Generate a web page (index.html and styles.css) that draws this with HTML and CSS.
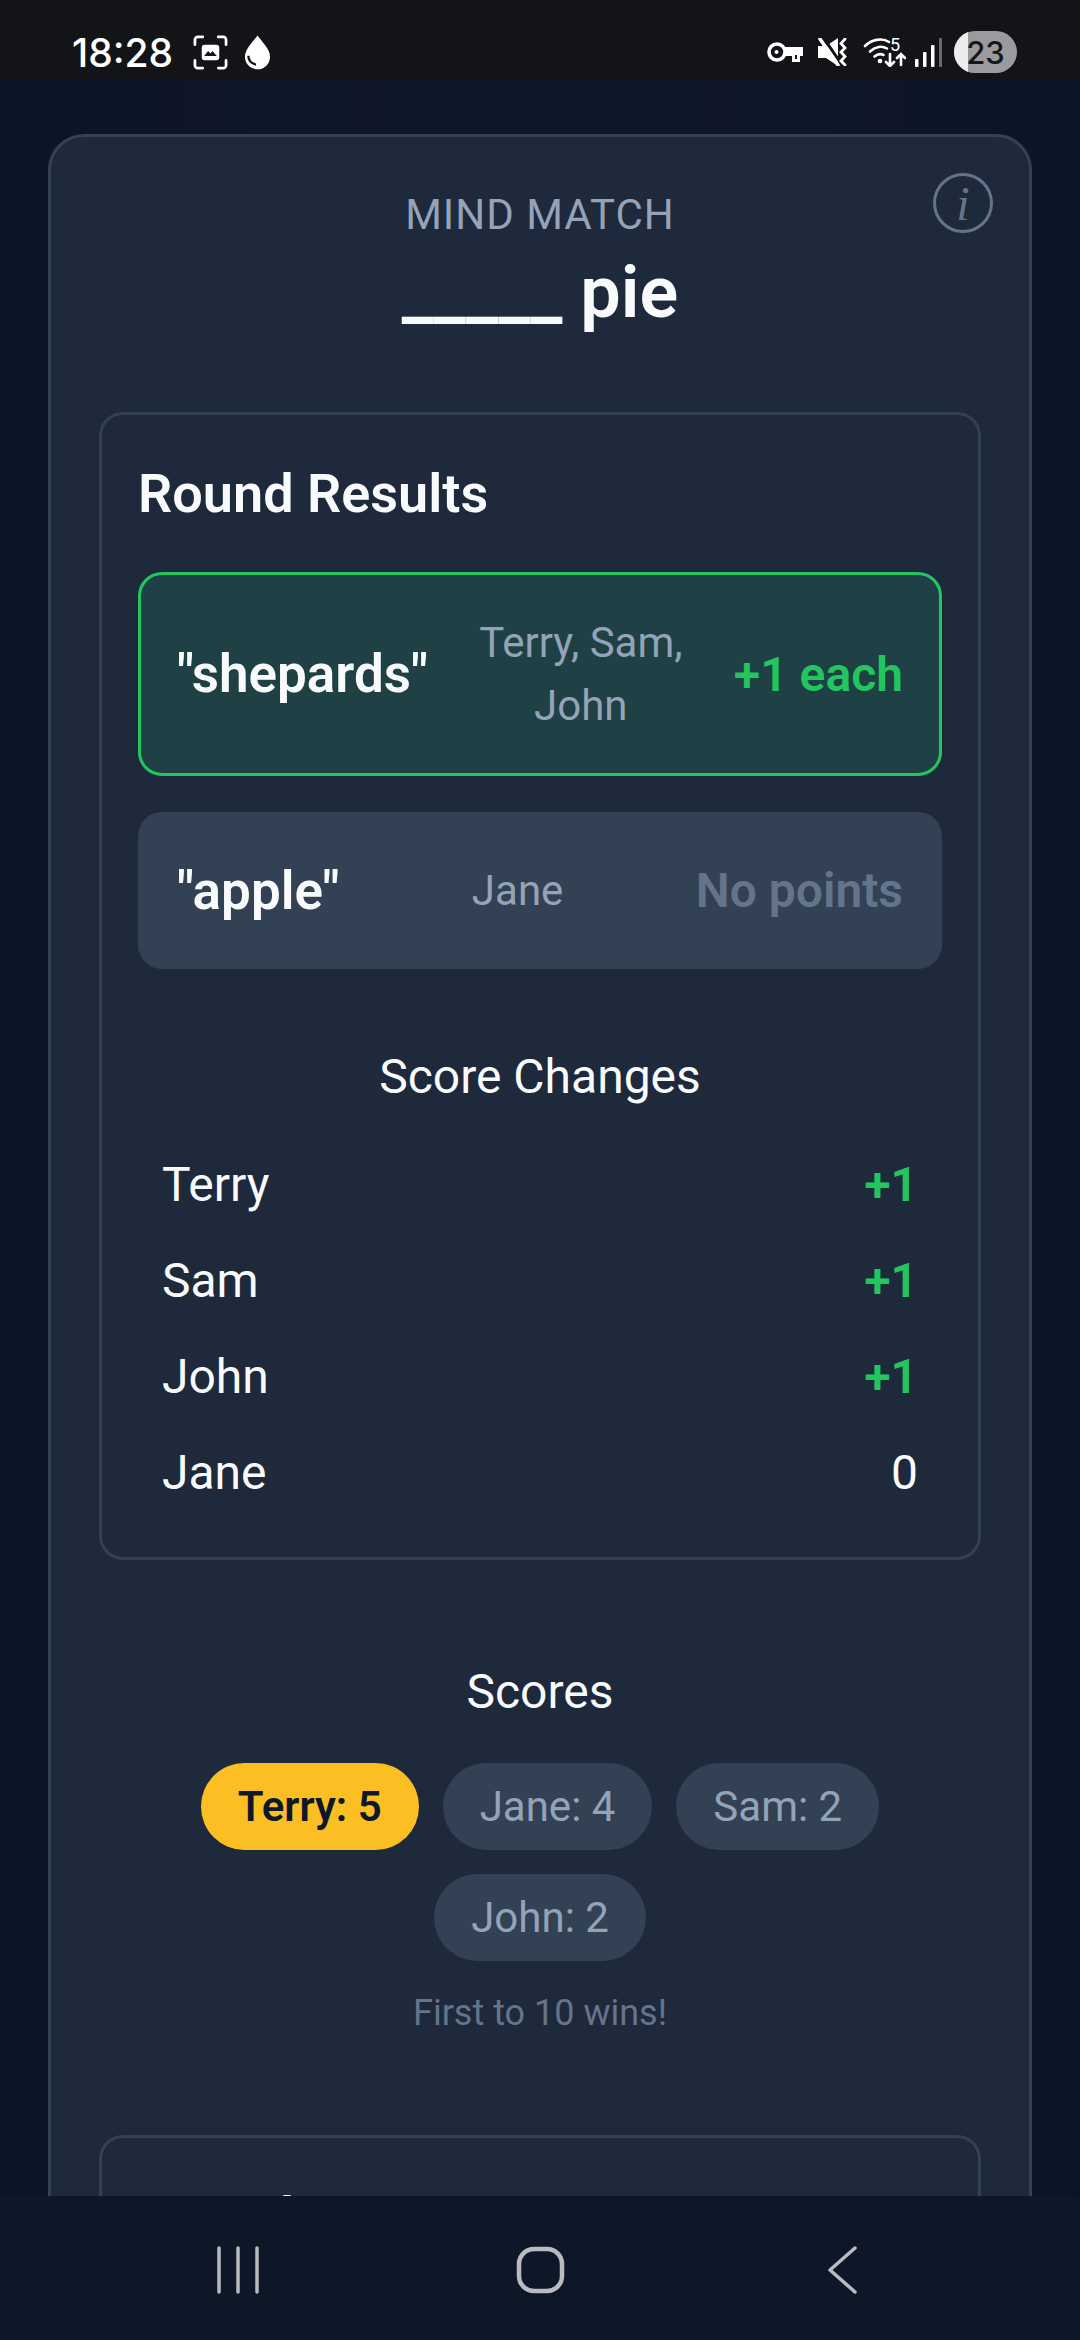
FILE: index.html
```html
<!DOCTYPE html>
<html lang="en">
<head>
    <meta charset="UTF-8">
    <meta name="viewport" content="width=device-width, initial-scale=1.0">
    <title>Mind Match</title>
    <link rel="stylesheet" href="styles.css">
</head>
<body>
    <div class="status-bar">
        <span class="clock">18:28</span>
        <svg class="ic-capture" viewBox="0 0 36 36" fill="none" stroke="#fff" stroke-width="2.800" stroke-linecap="round">
            <path d="M2 10V5a3 3 0 0 1 3-3h5M26 2h5a3 3 0 0 1 3 3v5M34 26v5a3 3 0 0 1-3 3h-5M10 34H5a3 3 0 0 1-3-3v-5"/>
            <rect x="9" y="10" width="18" height="16" rx="3" fill="#fff" stroke="none"/>
            <path d="M11.500 21.500l4-5 2.500 2.500 2-2.500 4.500 5z" fill="#131418" stroke="none"/>
        </svg>
        <svg class="ic-drop" viewBox="0 0 28 36">
            <path d="M14 1C9 8 1 15 1 23a13 13 0 0 0 26 0C27 15 19 8 14 1z" fill="#fff"/>
            <path d="M4.500 22c0 5 3 8 8 9" fill="none" stroke="#131418" stroke-width="2.400"/>
        </svg>
        <div class="status-right">
            <svg class="ic-key" viewBox="0 0 36 20">
                <circle cx="10" cy="10" r="8" fill="none" stroke="#fff" stroke-width="3.600"/>
                <circle cx="9.500" cy="10" r="2" fill="#fff"/>
                <path d="M18 5h18v9h-3v6h-8v-6h-7z" fill="#fff"/>
                <path d="M28 13h2v4h-2z" fill="#131418"/>
            </svg>
            <svg class="ic-mute" viewBox="0 0 29 28" fill="none" stroke="#fff" stroke-linecap="round">
                <path d="M0 8h8l12-8v28L8 20H0z" fill="#fff" stroke="none"/>
                <path d="M5 -1l19 28" stroke="#131418" stroke-width="3"/>
                <path d="M2 1l18 26" stroke-width="3.500"/>
                <path d="M27 1l-4 4.500 4 4.500-4 4 4 4.500-4 4.500 4 4" stroke-width="2.800"/>
            </svg>
            <svg class="ic-wifi" viewBox="0 0 43 30" fill="none" stroke="#fff" stroke-width="2.600" stroke-linecap="round">
                <path d="M2 9C8 3 19 0 26 5M7 14.500c5-5 12-6 17-3M11.500 19.500c3-2.500 6-3 9-1.500"/>
                <circle cx="17" cy="24" r="2.300" fill="#fff" stroke="none"/>
                <path d="M27 17v11.500M23 25l4 4 4-4M38 28V17M34 21l4-4 4 4"/>
                <text x="27" y="14" class="wifi-five">5</text>
            </svg>
            <svg class="ic-signal" viewBox="0 0 27 29" fill="#fff">
                <rect x="0" y="21" width="3.500" height="8" rx="1"/>
                <rect x="8" y="14" width="3.500" height="15" rx="1"/>
                <rect x="16" y="7" width="3.500" height="22" rx="1"/>
                <rect x="24" y="0" width="3" height="29" rx="1" fill="#6b6b6e"/>
            </svg>
            <div class="battery"><span class="battery-fill"></span><span class="battery-num">23</span></div>
        </div>
    </div>

    <div class="screen">
        <div class="game-card">
            <div class="info-btn">i</div>
            <div class="game-head">
                <div class="game-name">MIND MATCH</div>
                <h1 class="prompt">_____ pie</h1>
            </div>

            <div class="panel">
                <h2 class="panel-title">Round Results</h2>

                <div class="answer answer-match">
                    <span class="answer-word">"shepards"</span>
                    <span class="answer-names">Terry, Sam, John</span>
                    <span class="answer-points">+1 each</span>
                </div>
                <div class="answer">
                    <span class="answer-word">"apple"</span>
                    <span class="answer-names">Jane</span>
                    <span class="answer-points">No points</span>
                </div>

                <h3 class="sub-title changes-title">Score Changes</h3>
                <div class="change-row"><span>Terry</span><span class="plus">+1</span></div>
                <div class="change-row"><span>Sam</span><span class="plus">+1</span></div>
                <div class="change-row"><span>John</span><span class="plus">+1</span></div>
                <div class="change-row"><span>Jane</span><span>0</span></div>
            </div>

            <div class="scores">
                <h3 class="sub-title">Scores</h3>
                <div class="chips">
                    <span class="chip chip-lead">Terry: 5</span>
                    <span class="chip">Jane: 4</span>
                    <span class="chip">Sam: 2</span>
                    <span class="chip">John: 2</span>
                </div>
                <p class="goal">First to 10 wins!</p>
            </div>

            <div class="panel">
                <h2 class="panel-title">Round Summary</h2>
            </div>
        </div>
    </div>

    <div class="nav-bar">
        <svg class="nav-recent" viewBox="0 0 44 48" fill="none" stroke="#b9bbbf" stroke-width="3.500" stroke-linecap="round">
            <path d="M3 2v44M22 2v44M41 2v44"/>
        </svg>
        <svg class="nav-home" viewBox="0 0 49 48" fill="none" stroke="#b9bbbf" stroke-width="4.500">
            <rect x="3" y="3" width="43" height="42" rx="15"/>
        </svg>
        <svg class="nav-back" viewBox="0 0 29 48" fill="none" stroke="#b9bbbf" stroke-width="3.500" stroke-linecap="round" stroke-linejoin="round">
            <path d="M27 2L2 24l25 22"/>
        </svg>
    </div>
</body>
</html>
```

FILE: styles.css
```css
* { box-sizing: border-box; }
html, body { height: 100%; }
body { margin: 0; display: flex; flex-direction: column; overflow: hidden; background: #0f172a; color: #f8fafc; font-family: Roboto, "Noto Sans", sans-serif; }

.status-bar { height: 80px; flex: none; display: flex; align-items: center; padding: 24px 63px 0 72px; background: #131418; color: #fff; }
.clock { font-family: Inter, Roboto, sans-serif; font-size: 39px; font-weight: 500; margin-right: 20px; }
.ic-capture { width: 35px; height: 35px; margin-right: 16px; }
.ic-drop { width: 27px; height: 36px; }
.status-right { margin-left: auto; display: flex; align-items: center; }
.ic-key { width: 36px; height: 20px; margin-right: 15px; }
.ic-mute { width: 29px; height: 28px; margin-right: 16px; }
.ic-wifi { width: 43px; height: 30px; margin-right: 9px; }
.wifi-five { font-family: Roboto, sans-serif; font-size: 18px; fill: #fff; stroke: none; }
.ic-signal { width: 27px; height: 29px; margin-right: 12px; }
.battery { position: relative; width: 63px; height: 42px; border-radius: 21px; background: #9b9b9d; overflow: hidden; display: flex; align-items: center; justify-content: center; }
.battery-fill { position: absolute; left: 0; top: 0; bottom: 0; width: 14px; background: #ececec; }
.battery-num { position: relative; font-family: Inter, Roboto, sans-serif; font-size: 31px; font-weight: 500; color: #16171c; }

.screen { flex: 1; min-height: 0; overflow: hidden; padding: 54px 48px 0; background: linear-gradient(90deg, #0c1526, #0f172a 50%, #0c1526); }
.game-card { position: relative; background: #1e293b; border: 3px solid #334155; border-radius: 36px; padding: 54px 48px 48px; }
.info-btn { position: absolute; top: 36px; right: 36px; width: 60px; height: 60px; border: 3px solid #64748b; border-radius: 50%; display: flex; align-items: center; justify-content: center; color: #64748b; font-family: "Liberation Serif", serif; font-style: italic; font-size: 48px; }

.game-head { text-align: center; margin-bottom: 77px; }
.game-name { font-size: 42px; line-height: 48px; letter-spacing: 1px; color: #94a3b8; }
.prompt { margin: 12px 0 0; font-size: 72px; line-height: 84px; font-weight: 600; color: #f8fafc; }

.panel { border: 3px solid #334155; border-radius: 24px; padding: 36px; background: #1e293b; }
.panel-title { margin: 0 0 36px; font-size: 54px; line-height: 85px; font-weight: 600; color: #f8fafc; }

.answer { display: flex; align-items: center; justify-content: space-between; gap: 36px; margin-bottom: 36px; padding: 36px 39px; min-height: 157px; border-radius: 24px; background: #334155; }
.answer-match { min-height: 204px; border: 3px solid #22c55e; background: #1f4045; padding: 33px 36px; }
.answer-word { font-size: 53px; font-weight: 600; white-space: nowrap; }
.answer-names { flex: 1; text-align: center; font-size: 42px; line-height: 63px; color: #94a3b8; }
.answer-points { font-size: 48px; font-weight: 600; color: #64748b; white-space: nowrap; }
.answer-match .answer-points { color: #22c55e; }

.sub-title { margin: 0; text-align: center; font-size: 48px; line-height: 60px; font-weight: 400; color: #f8fafc; }
.changes-title { margin: 78px 0 30px; }
.change-row { display: flex; justify-content: space-between; padding: 0 24px; font-size: 48px; line-height: 96px; color: #f8fafc; }
.plus { color: #22c55e; font-weight: 600; }

.scores { padding: 102px 0 98px; text-align: center; }
.chips { display: flex; flex-wrap: wrap; justify-content: center; gap: 24px; margin-top: 41px; }
.chip { padding: 0 37px; height: 87px; line-height: 87px; border-radius: 44px; background: #334155; color: #94a3b8; font-size: 42px; }
.chip-lead { background: #fbbf24; color: #0f172a; font-weight: 600; }
.goal { margin: 28px 0 0; font-size: 36px; line-height: 48px; color: #64748b; }

.nav-bar { height: 144px; flex: none; display: grid; grid-template-columns: repeat(3, 302px); justify-content: center; justify-items: center; align-items: center; padding-top: 4px; background: #0e1728; }
.nav-recent { width: 44px; height: 48px; }
.nav-home { width: 49px; height: 48px; }
.nav-back { width: 29px; height: 48px; }
```
